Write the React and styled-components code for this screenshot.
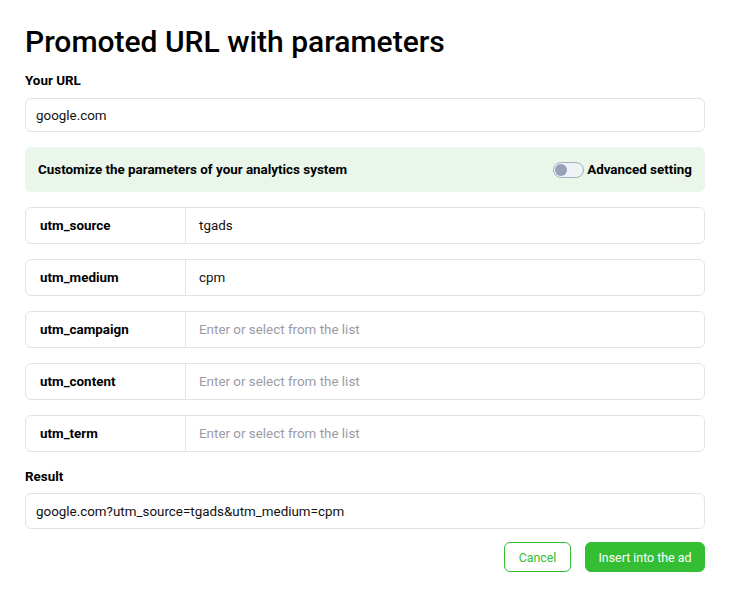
import React from "react";
import styled, { createGlobalStyle } from "styled-components";

const Global = createGlobalStyle`
  html, body { margin: 0; padding: 0; background: #fff; }
  body { font-family: Roboto, "Noto Sans", Arial, sans-serif; color: #000; }
  * { box-sizing: border-box; }
`;

const Page = styled.div`
  padding: 24px 26px 0 25px;
  width: 731px;
  display: flex;
  flex-direction: column;
`;

const Title = styled.h1`
  margin: 0;
  font-size: 30px;
  line-height: 36px;
  font-weight: 500;
`;

const Label = styled.div`
  font-size: 13.4px;
  font-weight: 700;
  line-height: 16px;
  margin-top: ${(p) => p.$mt || 0}px;
`;

const Field = styled.div`
  margin-top: ${(p) => p.$mt || 0}px;
  height: ${(p) => p.$h || 34}px;
  border: 1px solid #e3e3e6;
  border-radius: 6px;
  display: flex;
  align-items: center;
  padding-left: 10px;
  font-size: 13.4px;
  color: #111;
`;

const Banner = styled.div`
  margin-top: 15px;
  height: 45px;
  background: #e9f6e9;
  border-radius: 6px;
  display: flex;
  align-items: center;
  justify-content: space-between;
  padding: 0 13px;
  font-size: 13.4px;
  font-weight: 700;
`;

const ToggleWrap = styled.div`
  display: flex;
  align-items: center;
  gap: 3px;
`;

const Toggle = styled.div`
  width: 31px;
  height: 16px;
  border: 1px solid #a6aebf;
  border-radius: 8px;
  background: #eef3f5;
  position: relative;
  &::after {
    content: "";
    position: absolute;
    left: 1px;
    top: 1px;
    width: 12px;
    height: 12px;
    border-radius: 50%;
    background: #97a0b8;
  }
`;

const Rows = styled.div`
  margin-top: 15px;
  display: flex;
  flex-direction: column;
  gap: 15px;
`;

const Row = styled.div`
  height: 37px;
  border: 1px solid #e3e3e6;
  border-radius: 6px;
  display: grid;
  grid-template-columns: 160px 1fr;
  font-size: 13.4px;
`;

const Key = styled.div`
  border-right: 1px solid #e3e3e6;
  display: flex;
  align-items: center;
  padding-left: 14px;
  font-weight: 700;
`;

const Val = styled.div`
  display: flex;
  align-items: center;
  padding-left: 13px;
  color: ${(p) => (p.$placeholder ? "#9b9ba6" : "#111")};
`;

const Actions = styled.div`
  margin-top: 13px;
  display: flex;
  justify-content: flex-end;
  gap: 14px;
`;

const Button = styled.button`
  height: 30px;
  padding: 0;
  white-space: nowrap;
  border-radius: 6px;
  font-family: Roboto, Arial, sans-serif;
  font-size: 12.4px;
  border: 1px solid #34be34;
  background: ${(p) => (p.$primary ? "#34be34" : "#fff")};
  color: ${(p) => (p.$primary ? "#fff" : "#34be34")};
  width: ${(p) => p.$w}px;
  cursor: pointer;
`;

const params = [
  ["utm_source", "tgads"],
  ["utm_medium", "cpm"],
  ["utm_campaign", ""],
  ["utm_content", ""],
  ["utm_term", ""],
];

export default function App() {
  return (
    <>
      <Global />
      <Page>
        <Title>Promoted URL with parameters</Title>
        <Label $mt={13}>Your URL</Label>
        <Field $mt={9}>google.com</Field>
        <Banner>
          <span>Customize the parameters of your analytics system</span>
          <ToggleWrap>
            <Toggle />
            <span>Advanced setting</span>
          </ToggleWrap>
        </Banner>
        <Rows>
          {params.map(([k, v]) => (
            <Row key={k}>
              <Key>{k}</Key>
              <Val $placeholder={!v}>{v || "Enter or select from the list"}</Val>
            </Row>
          ))}
        </Rows>
        <Label $mt={17}>Result</Label>
        <Field $mt={8} $h={36}>google.com?utm_source=tgads&amp;utm_medium=cpm</Field>
        <Actions>
          <Button $w={67}>Cancel</Button>
          <Button $primary $w={120}>Insert into the ad</Button>
        </Actions>
      </Page>
    </>
  );
}
